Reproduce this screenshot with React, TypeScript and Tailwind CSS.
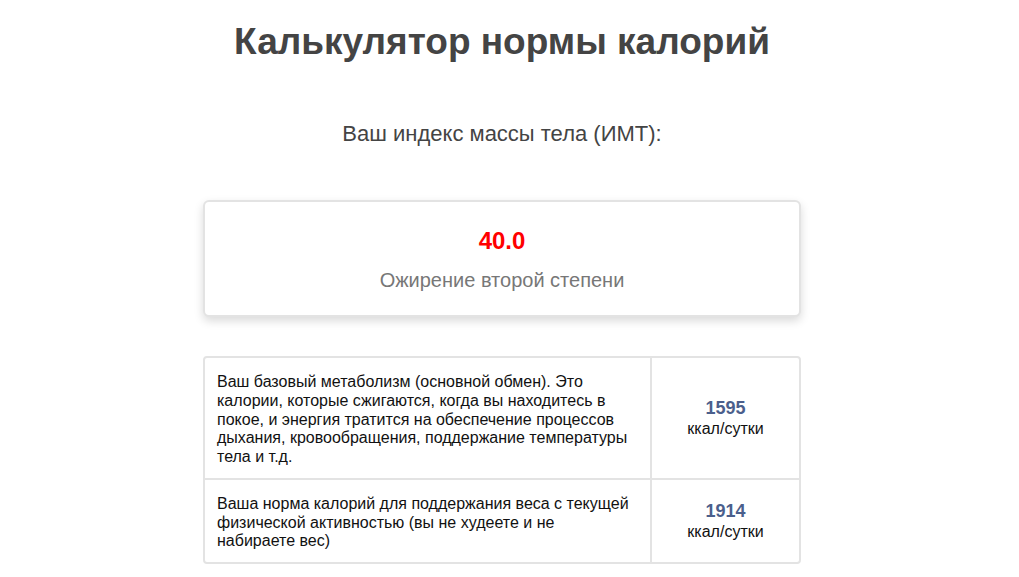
export default function App() {
  const rows = [
    {
      text: "Ваш базовый метаболизм (основной обмен). Это калории, которые сжигаются, когда вы находитесь в покое, и энергия тратится на обеспечение процессов дыхания, кровообращения, поддержание температуры тела и т.д.",
      value: "1595",
    },
    {
      text: "Ваша норма калорий для поддержания веса с текущей физической активностью (вы не худеете и не набираете вес)",
      value: "1914",
    },
  ];

  return (
    <div className="min-h-[577px] bg-white font-['Liberation_Sans',Arial,sans-serif]">
      <div className="w-[1004px] flex flex-col items-center">
        <h1 className="mt-[21px] text-[37px] leading-[42px] font-bold text-[#444]">
          Калькулятор нормы калорий
        </h1>
        <p className="mt-[58px] text-[22px] leading-[26px] text-[#444]">
          Ваш индекс массы тела (ИМТ):
        </p>

        {/* карточка ИМТ */}
        <div className="mt-[53px] w-[598px] h-[117px] rounded-md border-2 border-[#e3e3e3] bg-white shadow-[0_4px_10px_rgba(0,0,0,0.15)] flex flex-col items-center">
          <div className="mt-[25px] text-[24px] leading-[28px] font-bold text-[#ff0000]">40.0</div>
          <div className="mt-[13px] text-[20px] leading-[24px] text-[#777]">Ожирение второй степени</div>
        </div>

        {/* таблица калорий */}
        <div className="mt-[39px] w-[598px] rounded-[4px] border-2 border-[#e3e3e3] overflow-hidden">
          {rows.map((r, i) => (
            <div
              key={r.value}
              className={"flex " + (i > 0 ? "border-t-2 border-[#e3e3e3]" : "")}
            >
              <div className="w-[447px] border-r-2 border-[#e3e3e3] pl-[12px] pr-[18px] pt-[15px] pb-[11px] text-[16px] leading-[18.75px] text-[#111]">
                {r.text}
              </div>
              <div className="flex-1 flex flex-col items-center justify-center text-center">
                <div className="text-[18px] leading-[22px] font-bold text-[#4b5f8c]">{r.value}</div>
                <div className="text-[16px] leading-[20px] text-[#111]">ккал/сутки</div>
              </div>
            </div>
          ))}
        </div>
      </div>
    </div>
  );
}
